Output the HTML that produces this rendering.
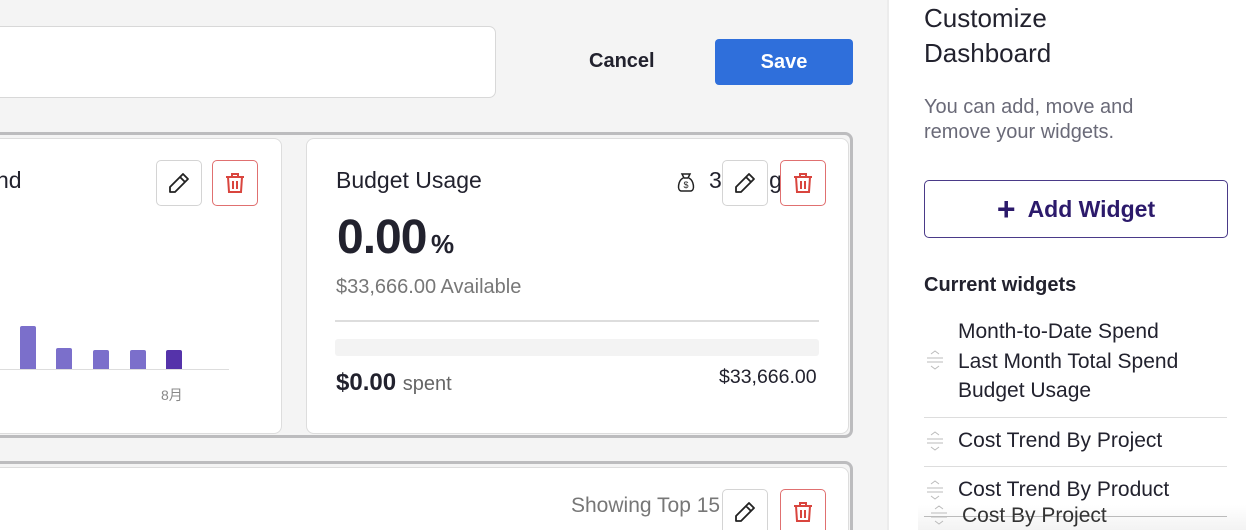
<!DOCTYPE html>
<html><head><meta charset="utf-8"><style>
*{box-sizing:border-box;margin:0;padding:0}
html,body{width:1246px;height:530px;overflow:hidden}
body{background:#f4f4f4;font-family:"Liberation Sans","Noto Sans CJK JP",sans-serif;color:#22222e;position:relative}
.a{position:absolute}
.btn{position:absolute;width:46px;height:46px;border:1px solid #d4d4d4;border-radius:5px;background:#fff;display:flex;align-items:center;justify-content:center}
.del{border-color:#e07070}
.card{position:absolute;background:#fff;border:1px solid #ddd;border-radius:8px}
.bar{position:absolute;width:16px;background:#7b6fcb;border-radius:2px 2px 0 0}
.it{position:absolute;left:958px;font-size:21px;color:#22222e}
.hl{position:absolute;left:924px;width:303px;height:1px;background:#ddd}
</style></head><body>
<div class="a" style="left:-10px;top:26px;width:506px;height:72px;background:#fff;border:1px solid #d8d8d8;border-radius:7px"></div>
<div class="a" style="left:589px;top:50px;font-size:20px;font-weight:bold">Cancel</div>
<div class="a" style="left:715px;top:39px;width:138px;height:46px;background:#2f6fdb;border-radius:4px;color:#fff;font-weight:bold;font-size:20px;display:flex;align-items:center;justify-content:center">Save</div>

<div class="a" style="left:-10px;top:132px;width:863px;height:306px;border:3px solid #bcbcbe;border-left:none;border-radius:0 8px 8px 0"></div>
<div class="card" style="left:-10px;top:138px;width:292px;height:296px"></div>
<div class="a" style="left:-4px;top:167px;font-size:23px">nd</div>
<div class="a" style="left:0;top:369px;width:229px;height:1px;background:#ddd"></div>
<div class="bar" style="left:20px;top:326px;height:43px"></div>
<div class="bar" style="left:56px;top:348px;height:21px"></div>
<div class="bar" style="left:93px;top:350px;height:19px"></div>
<div class="bar" style="left:130px;top:350px;height:19px"></div>
<div class="bar" style="left:166px;top:350px;height:19px;background:#5533aa"></div>
<div class="a" style="left:161px;top:385px;font-size:14px;color:#888">8月</div>
<div class="card" style="left:306px;top:138px;width:543px;height:296px"></div>
<div class="a" style="left:336px;top:167px;font-size:23px">Budget Usage</div>
<svg class="a" style="left:675px;top:171px" width="22" height="22" viewBox="0 0 22 22" fill="none" stroke="#222" stroke-width="1.5"><path d="M7 3h8l-2 4h-4z"/><path d="M8 7C3 10 2 19 6 20h10c4-1 3-10-2-13"/><text x="11" y="17" font-size="9" text-anchor="middle" fill="#222" stroke="none">$</text></svg>
<div class="a" style="left:709px;top:167px;font-size:23px">3</div>
<div class="a" style="left:764px;top:167px;font-size:23px">lg</div>
<div class="a" style="left:337px;top:210px;font-size:48px;font-weight:bold;letter-spacing:-1px">0.00</div>
<div class="a" style="left:431px;top:229px;font-size:26px;font-weight:bold">%</div>
<div class="a" style="left:336px;top:276px;font-size:20px;color:#777">$33,666.00 Available</div>
<div class="a" style="left:335px;top:320px;width:484px;height:2px;background:#ddd"></div>
<div class="a" style="left:335px;top:339px;width:484px;height:17px;background:#f3f3f3;border-radius:3px"></div>
<div class="a" style="left:336px;top:369px;font-size:24px;font-weight:bold">$0.00 <span style="font-size:20px;font-weight:normal;color:#666">spent</span></div>
<div class="a" style="left:719px;top:366px;font-size:19.5px">$33,666.00</div>

<div class="a" style="left:-10px;top:461px;width:863px;height:69px;border-top:3px solid #bcbcbe;border-right:3px solid #bcbcbe;border-radius:0 8px 0 0"></div>
<div class="card" style="left:-10px;top:467px;width:859px;height:80px"></div>
<div class="a" style="left:571px;top:494px;font-size:21px;color:#777">Showing Top 15 <span style="color:#2f6fdb">da</span></div>

<svg width="0" height="0" style="position:absolute"><defs>
<symbol id="pen" viewBox="0 0 24 24"><path d="M16 3l5 5L8 21H3v-5z M13 6l5 5" fill="none" stroke="#222" stroke-width="1.8" stroke-linejoin="round"/></symbol>
<symbol id="bin" viewBox="0 0 24 24"><g fill="none" stroke="#d9453e" stroke-width="2"><path d="M3 6h18M9 6V3h6v3M5 6l1 15h12l1-15M10 10v8M14 10v8"/></g></symbol>
</defs></svg>
<div class="btn" style="left:156px;top:160px"><svg width="24" height="24"><use href="#pen"/></svg></div>
<div class="btn del" style="left:212px;top:160px"><svg width="24" height="24"><use href="#bin"/></svg></div>
<div class="btn" style="left:722px;top:160px"><svg width="24" height="24"><use href="#pen"/></svg></div>
<div class="btn del" style="left:780px;top:160px"><svg width="24" height="24"><use href="#bin"/></svg></div>
<div class="btn" style="left:722px;top:489px"><svg width="24" height="24"><use href="#pen"/></svg></div>
<div class="btn del" style="left:780px;top:489px"><svg width="24" height="24"><use href="#bin"/></svg></div>

<div class="a" style="left:887px;top:0;width:359px;height:530px;background:#fff;border-left:2px solid #ececec"></div>
<div class="a" style="left:924px;top:1px;font-size:26px;line-height:35px">Customize<br>Dashboard</div>
<div class="a" style="left:924px;top:95px;font-size:20px;line-height:25px;color:#6a6a78">You can add, move and<br>remove your widgets.</div>
<div class="a" style="left:924px;top:180px;width:304px;height:58px;border:1.5px solid #4a3a88;border-radius:5px;display:flex;align-items:center;justify-content:center;color:#2c1a6b;font-weight:bold;font-size:23px"><span style="font-size:32px;margin-right:12px;line-height:1">+</span>Add Widget</div>
<div class="a" style="left:924px;top:274px;font-size:20px;font-weight:bold">Current widgets</div>
<div class="it" style="top:320px">Month-to-Date Spend</div>
<div class="it" style="top:350px">Last Month Total Spend</div>
<div class="it" style="top:379px">Budget Usage</div>
<div class="hl" style="top:417px"></div>
<div class="it" style="top:429px">Cost Trend By Project</div>
<div class="hl" style="top:466px"></div>
<div class="it" style="top:478px">Cost Trend By Product</div>
<div class="a" style="left:918px;top:505px;width:328px;height:25px;background:linear-gradient(#fff,#f3f3f3)"></div>
<div class="hl" style="top:516px;background:#bbb"></div>
<div class="it" style="top:504px;left:962px;color:#333">Cost By Project</div>
<svg class="a" style="left:926px;top:349px" width="18" height="22" viewBox="0 0 18 22" fill="none" stroke="#bbb" stroke-width="1"><path d="M5 5l4-3 4 3M1 9h16M1 13h16M5 17l4 3 4-3"/></svg>
<svg class="a" style="left:926px;top:430px" width="18" height="22" viewBox="0 0 18 22" fill="none" stroke="#bbb" stroke-width="1"><path d="M5 5l4-3 4 3M1 9h16M1 13h16M5 17l4 3 4-3"/></svg>
<svg class="a" style="left:926px;top:479px" width="18" height="22" viewBox="0 0 18 22" fill="none" stroke="#bbb" stroke-width="1"><path d="M5 5l4-3 4 3M1 9h16M1 13h16M5 17l4 3 4-3"/></svg>
<svg class="a" style="left:930px;top:504px" width="18" height="22" viewBox="0 0 18 22" fill="none" stroke="#bbb" stroke-width="1"><path d="M5 5l4-3 4 3M1 9h16M1 13h16M5 17l4 3 4-3"/></svg>
</body></html>
